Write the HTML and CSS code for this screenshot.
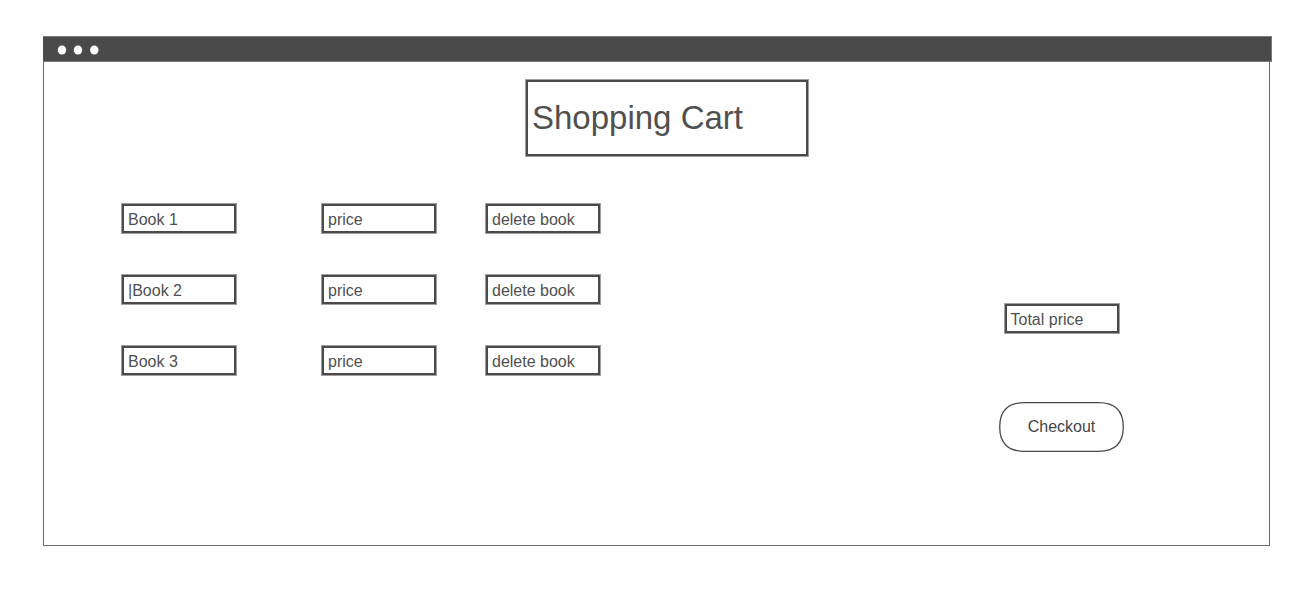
FILE: index.html
```html
<!DOCTYPE html>
<html lang="en">
<head>
<meta charset="utf-8">
<title>Shopping Cart</title>
<link rel="stylesheet" href="styles.css">
</head>
<body>
<div class="window">
  <header class="titlebar">
    <svg class="dots" width="42" height="10" viewBox="0 0 42 10" aria-hidden="true">
      <ellipse cx="5" cy="5" rx="4.2" ry="4.5"/>
      <ellipse cx="21" cy="5" rx="4.2" ry="4.5"/>
      <ellipse cx="37.3" cy="5" rx="4.2" ry="4.5"/>
    </svg>
  </header>
  <main class="page">
    <div class="masthead">
      <h1 class="box title">Shopping Cart</h1>
    </div>
    <div class="content">
      <ul class="items">
        <li class="item">
          <span class="box name">Book 1</span>
          <span class="box">price</span>
          <button class="box delete" type="button">delete book</button>
        </li>
        <li class="item">
          <span class="box name">|Book 2</span>
          <span class="box">price</span>
          <button class="box delete" type="button">delete book</button>
        </li>
        <li class="item">
          <span class="box name">Book 3</span>
          <span class="box">price</span>
          <button class="box delete" type="button">delete book</button>
        </li>
      </ul>
      <section class="summary">
        <div class="box">Total price</div>
        <button class="checkout" type="button">
          <svg class="outline" viewBox="0 0 125 50" preserveAspectRatio="none" aria-hidden="true">
            <path d="M25.5 .7H99.5Q124.3 .7 124.3 25T99.5 49.3H25.5Q.7 49.3 .7 25T25.5 .7Z"/>
          </svg>
          Checkout
        </button>
      </section>
    </div>
  </main>
</div>
</body>
</html>
```
FILE: styles.css
```css
* { box-sizing: border-box; }

body {
  margin: 0;
  min-height: 100vh;
  display: flex;
  padding: 36px 36px 49px 43px;
  background: #fff;
  color: #505050;
  font: 16px/24px "Liberation Sans", Arial, sans-serif;
}

.window {
  flex: 1;
  display: flex;
  flex-direction: column;
}

.titlebar {
  display: flex;
  align-items: center;
  height: 26px;
  padding: 2px 14px 0;
  border: 1px solid #7a7a7a;
  border-width: 1px 1px 1px 0;
  background: #4a4a4a;
}

.dots { fill: #fff; }

.page {
  flex: 1;
  margin-right: 2px;
  padding: 18px 77px 48px 78px;
  border: 1px solid #6a6a6a;
  border-top: 0;
}

.box {
  display: block;
  width: 114px;
  padding: 2px 4px 0;
  border: 2px solid #4a4a4a;
  background: #fff;
  box-shadow: 0 0 0 1px #a0a0a0;
  color: inherit;
  font: inherit;
  line-height: 23px;
  text-align: left;
}

.masthead {
  display: flex;
  justify-content: center;
  padding-left: 20px;
}

.title {
  width: 282px;
  margin: 0;
  padding: 0 4px 1px;
  font-size: 33px;
  line-height: 71px;
}

.content {
  display: flex;
  justify-content: space-between;
  margin-top: 48px;
}

.items {
  display: flex;
  flex-direction: column;
  gap: 42px;
  margin: 0;
  padding: 0;
  list-style: none;
}

.item { display: flex; }

.name { margin-right: 86px; }

.delete { margin-left: 50px; }

.summary {
  display: flex;
  flex-direction: column;
  align-items: center;
  gap: 69px;
  margin: 100px 68px 0 0;
}

.checkout {
  position: relative;
  width: 125px;
  height: 50px;
  padding: 0;
  border: 0;
  background: none;
  color: #444;
  font: inherit;
}

.outline {
  position: absolute;
  inset: 0;
  width: 100%;
  height: 100%;
  fill: none;
  stroke: #4a4a4a;
  stroke-width: 1.3;
}
```
